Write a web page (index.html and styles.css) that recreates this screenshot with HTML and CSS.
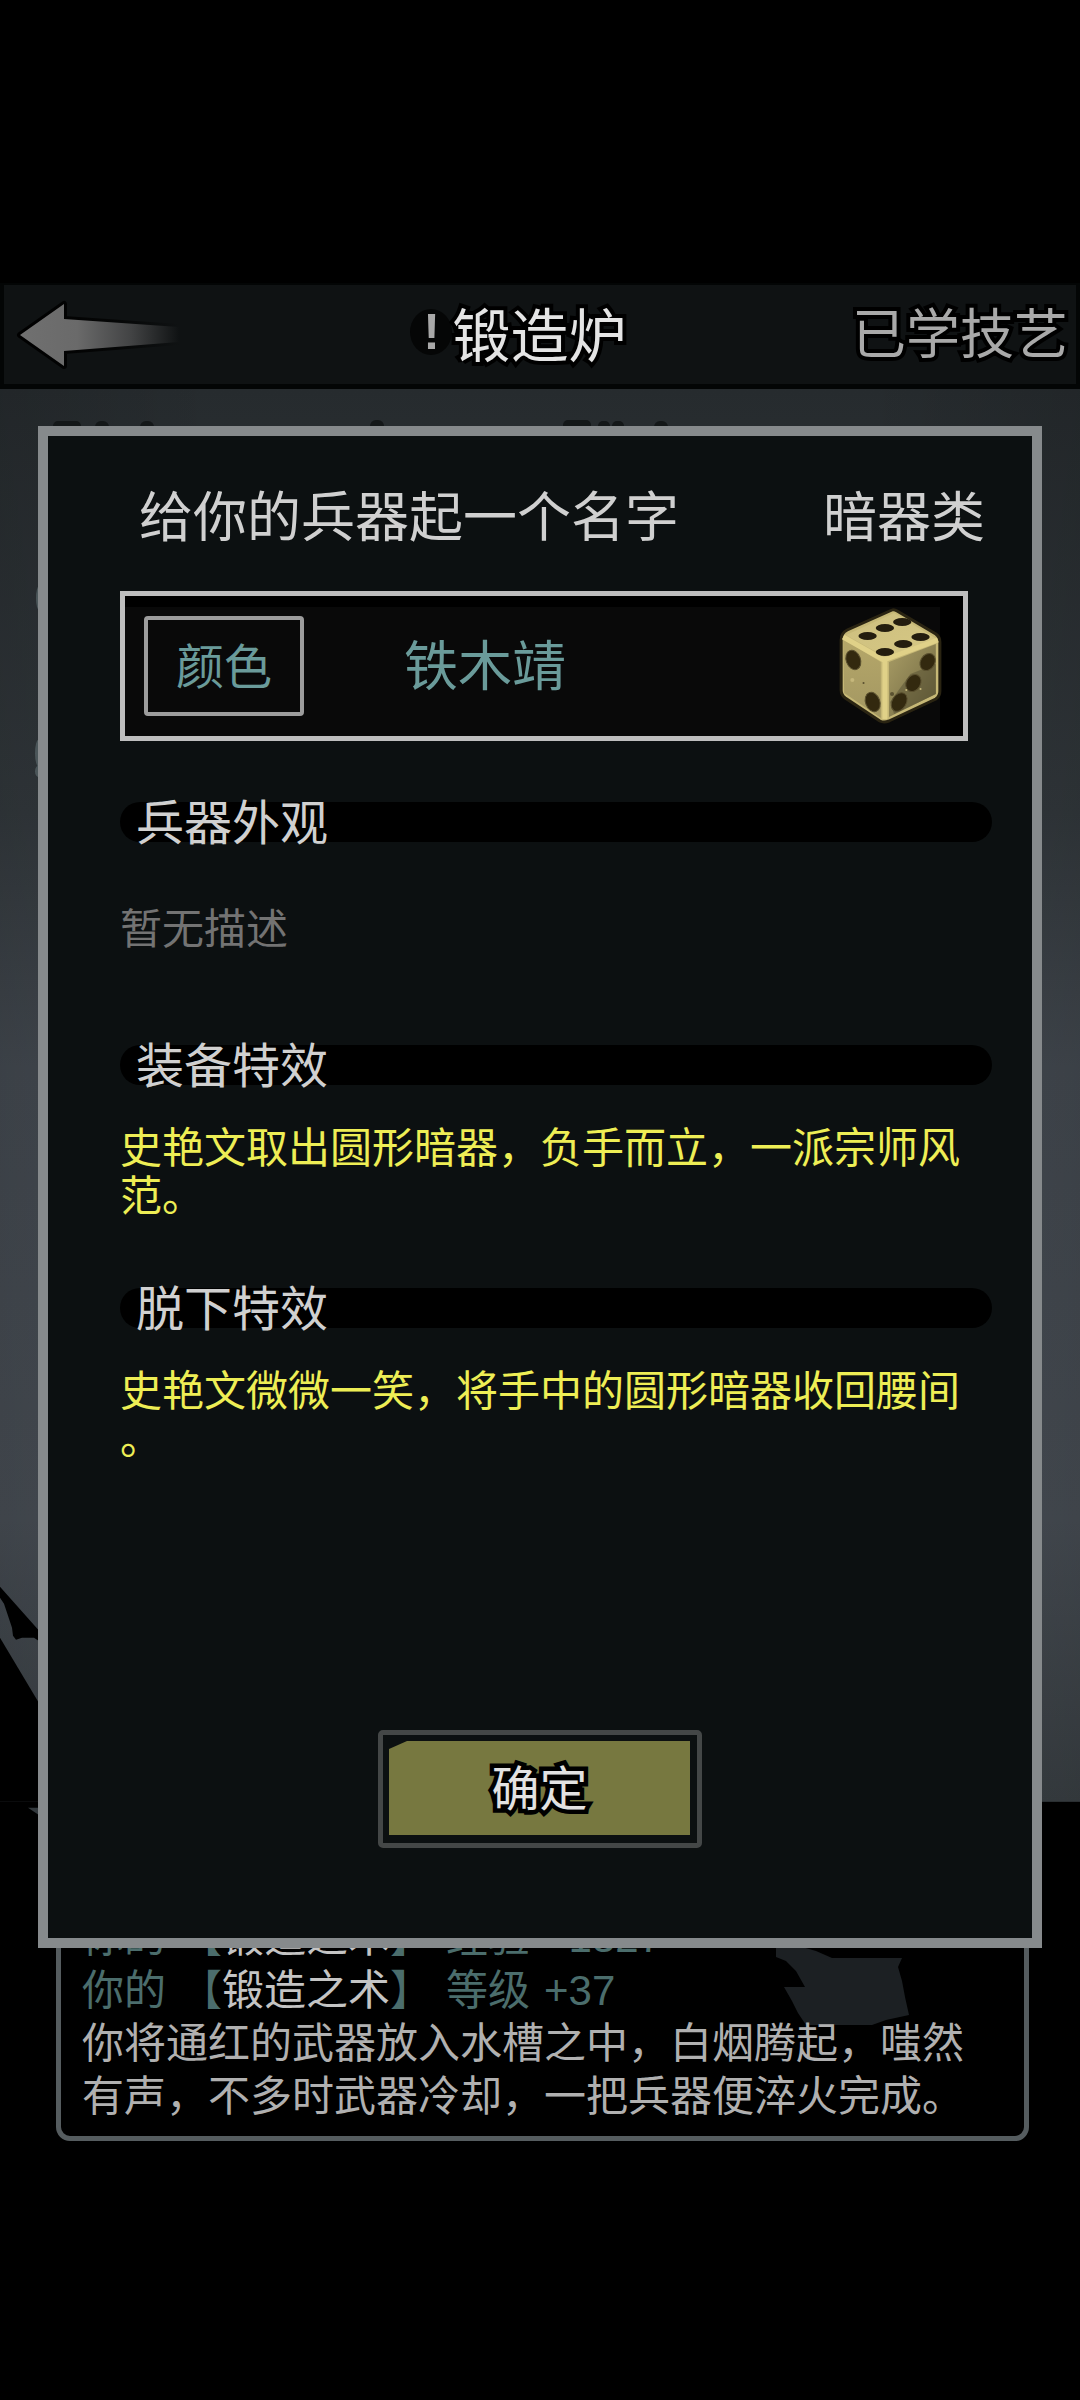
FILE: index.html
```html
<!DOCTYPE html>
<html lang="zh-CN">
<head>
<meta charset="utf-8">
<meta name="viewport" content="width=device-width">
<title>锻造炉</title>
<link rel="stylesheet" href="styles.css">
</head>
<body>
<header class="topbar">
  <button class="back" type="button" aria-label="返回">
    <svg width="172" height="80" viewBox="0 0 172 80" aria-hidden="true">
      <defs>
        <linearGradient id="tail" x1="0" x2="1" y1="0" y2="0">
          <stop offset="0" stop-color="#707070"/>
          <stop offset=".36" stop-color="#6a6a6a"/>
          <stop offset=".7" stop-color="#424344"/>
          <stop offset="1" stop-color="#0f1213"/>
        </linearGradient>
        <linearGradient id="edge" x1="0" x2="1" y1="0" y2="0">
          <stop offset="0" stop-color="#000"/>
          <stop offset=".6" stop-color="#050606"/>
          <stop offset="1" stop-color="#0f1213"/>
        </linearGradient>
      </defs>
      <path d="M7 40 51 9V24L166 32V47L51 56V71Z" fill="url(#tail)" stroke="url(#edge)" stroke-width="6" stroke-linejoin="round" paint-order="stroke"/>
    </svg>
  </button>
  <h1 class="title"><span class="mark">!</span>锻造炉</h1>
  <a class="skills" href="#skills">已学技艺</a>
</header>
<main class="stage">
  <svg class="scene" viewBox="0 0 1080 1751" preserveAspectRatio="none" aria-hidden="true">
    <defs>
      <linearGradient id="wall" x1="0" x2="0" y1="0" y2="1">
        <stop offset="0" stop-color="#262b2e"/>
        <stop offset=".3" stop-color="#32383c"/>
        <stop offset=".48" stop-color="#434950"/>
        <stop offset=".8" stop-color="#474d54"/>
        <stop offset="1" stop-color="#393f43"/>
      </linearGradient>
      <linearGradient id="shade" x1="0" x2="1" y1="0" y2="0">
        <stop offset="0" stop-color="#000" stop-opacity=".12"/>
        <stop offset=".2" stop-color="#000" stop-opacity="0"/>
        <stop offset=".8" stop-color="#000" stop-opacity="0"/>
        <stop offset="1" stop-color="#000" stop-opacity=".12"/>
      </linearGradient>
    </defs>
    <rect width="1080" height="1412" fill="url(#wall)"/>
    <rect width="1080" height="1412" fill="url(#shade)"/>
    <path d="M0 1197 40 1242V1252L34 1248H22L16 1250 13 1246 12 1238 4 1214 0 1208Z"/>
    <path d="M0 1248 40 1315V1412H0Z"/>
    <path d="M28 1418H40V1426Z" fill="#33393d"/>
    <g fill="#131718">
      <rect x="53" y="32" width="28" height="12" rx="5"/>
      <rect x="95" y="32" width="14" height="12" rx="6"/>
      <rect x="140" y="32" width="14" height="12" rx="6"/>
      <rect x="370" y="31" width="14" height="12" rx="6"/>
      <rect x="563" y="31" width="28" height="12" rx="5"/>
      <rect x="598" y="32" width="12" height="12" rx="5"/>
      <rect x="612" y="32" width="12" height="12" rx="5"/>
      <rect x="654" y="32" width="14" height="12" rx="6"/>
    </g>
    <g fill="#4b5659">
      <ellipse cx="39" cy="209" rx="3" ry="12"/>
      <ellipse cx="39" cy="364" rx="4" ry="14"/>
      <ellipse cx="39" cy="382" rx="4" ry="6"/>
    </g>
  </svg>

  <section class="log" aria-label="消息">
    <p class="gain"><span>你的</span><span>【<span class="art">锻造之术</span>】</span><span>经验</span><span>+1327</span></p>
    <p class="gain"><span>你的</span><span>【<span class="art">锻造之术</span>】</span><span>等级</span><span>+37</span></p>
    <p>你将通红的武器放入水槽之中，白烟腾起，嗤然有声，不多时武器冷却，一把兵器便淬火完成。</p>
    <svg class="smoke" width="136" height="80" viewBox="0 0 136 80" aria-hidden="true">
      <path d="M0 0H26L40 4 56 11H126L122 20 126 34 129 50 133 68 110 73 96 78H30L22 66 16 54 8 40H29L20 24 10 14 0 10Z" fill="#1c2023"/>
    </svg>
  </section>

  <form class="dialog" role="dialog" aria-labelledby="dialog-title">
    <div class="dialog-head">
      <label class="prompt" id="dialog-title" for="weapon-name">给你的兵器起一个名字</label>
      <span>暗器类</span>
    </div>
    <div class="name-box">
      <div class="name-row">
        <button class="color" type="button">颜色</button>
        <input class="name" id="weapon-name" type="text" value="铁木靖">
        <button class="dice" type="button" aria-label="随机名字">
          <svg width="114" height="124" viewBox="0 0 112 124" preserveAspectRatio="none" aria-hidden="true">
            <defs>
              <linearGradient id="top" x1="0" x2="1" y1="0" y2="1">
                <stop offset="0" stop-color="#cdbf7f"/><stop offset="1" stop-color="#d6c884"/>
              </linearGradient>
              <linearGradient id="left" x1="0" x2="0" y1="0" y2="1">
                <stop offset="0" stop-color="#b5a769"/><stop offset="1" stop-color="#a39762"/>
              </linearGradient>
              <linearGradient id="right" x1="0" x2="1" y1="0" y2="1">
                <stop offset="0" stop-color="#a99d66"/><stop offset=".5" stop-color="#8b8152"/><stop offset="1" stop-color="#57502f"/>
              </linearGradient>
            </defs>
            <path d="M58 6 14 26Q8 29 8 36V86Q8 91 12 94L46 117Q50 119 55 117L101 95Q105 92 105 87V38Q105 33 101 30L63 7Q60 5 58 6Z" fill="#c6b876" stroke="#2a2412" stroke-width="3"/>
            <path d="M60 9 13 31 51 53 102 35Z" fill="url(#top)"/>
            <path d="M10 35 47 58V114L11 89Z" fill="url(#left)"/>
            <path d="M55 58 101 40V90L55 113Z" fill="url(#right)"/>
            <path d="M76 70 101 60V90L60 110 56 98Z" fill="#5f5838" opacity=".6"/>
            <path d="M10 33 50 56 103 36M51 56V115" fill="none" stroke="#e0d188" stroke-width="5" stroke-linejoin="round"/>
            <g fill="#241d0e">
              <ellipse cx="68" cy="18" rx="9" ry="4"/><ellipse cx="51" cy="24" rx="9" ry="4"/><ellipse cx="34" cy="32" rx="9" ry="4"/>
              <ellipse cx="86" cy="33" rx="9" ry="4"/><ellipse cx="69" cy="40" rx="9" ry="4"/><ellipse cx="51" cy="48" rx="9" ry="4"/>
            </g>
            <g fill="#33290f" stroke="#5b5130" stroke-width="1">
              <ellipse cx="20" cy="56" rx="7" ry="10" transform="rotate(-20 20 56)"/>
              <ellipse cx="39" cy="98" rx="7" ry="10" transform="rotate(-20 39 98)"/>
              <ellipse cx="93" cy="58" rx="7" ry="9" transform="rotate(30 93 58)"/>
              <ellipse cx="79" cy="79" rx="7" ry="9" transform="rotate(30 79 79)"/>
              <ellipse cx="65" cy="98" rx="7" ry="10" transform="rotate(30 65 98)"/>
            </g>
            <g fill="#c5b77b"><circle cx="19" cy="76" r="2"/><circle cx="72" cy="86" r="1"/><circle cx="86" cy="85" r="1"/></g>
            <g fill="#5a5130"><circle cx="30" cy="79" r="1"/><circle cx="58" cy="90" r="2"/></g>
          </svg>
        </button>
      </div>
    </div>

    <section class="block">
      <h2 class="heading">兵器外观</h2>
      <p class="empty">暂无描述</p>
    </section>
    <section class="block">
      <h2 class="heading">装备特效</h2>
      <p class="effect">史艳文取出圆形暗器，负手而立，一派宗师风范。</p>
    </section>
    <section class="block">
      <h2 class="heading">脱下特效</h2>
      <p class="effect">史艳文微微一笑，将手中的圆形暗器收回腰间。</p>
    </section>

    <button class="confirm" type="submit"><span class="confirm-face">确定</span></button>
  </form>
</main>
</body>
</html>
```
FILE: styles.css
```css
* {
  box-sizing: border-box;
}

body {
  margin: 0;
  min-height: 100vh;
  padding: 283px 0 260px;
  background: #000;
  color: #d0d0d0;
  font-family: "Liberation Sans", "Noto Sans CJK SC", sans-serif;
  font-size: 42px;
  font-weight: 400;
}

h1,
h2,
p {
  margin: 0;
  font-weight: inherit;
}

button,
input {
  padding: 0;
  border: 0;
  background: none;
  color: inherit;
  font: inherit;
}

/* Top bar */

.topbar {
  display: flex;
  align-items: center;
  justify-content: space-between;
  height: 106px;
  padding: 0 8px 0 9px;
  border: solid #030505;
  border-width: 2px 4px 5px;
  background: #0f1213;
}

.back,
.back svg,
.dice svg {
  display: block;
}

.title,
.skills {
  -webkit-text-stroke: 8px #000;
  paint-order: stroke fill;
  stroke-linejoin: round;
  line-height: 80px;
  white-space: nowrap;
}

.title {
  display: flex;
  align-items: center;
  padding-bottom: 6px;
  color: #e4e4e4;
  font-family: "KaiTi", "Kaiti SC", "STKaiti", "Noto Sans CJK SC", sans-serif;
  font-size: 58px;
}

.mark {
  width: 42px;
  height: 46px;
  border-radius: 50%;
  background: #050606;
  color: #a8a8a8;
  font-family: "Liberation Sans", sans-serif;
  font-size: 50px;
  font-weight: 700;
  line-height: 46px;
  text-align: center;
  -webkit-text-stroke: 0;
}

.skills {
  color: #a9a9a9;
  font-size: 54px;
  text-decoration: none;
}

/* Stage: the log and the dialog share one cell above the scene */

.stage {
  position: relative;
  display: grid;
  grid-template-columns: minmax(0, 1fr);
}

.stage > .log,
.stage > .dialog {
  grid-area: 1 / 1;
  position: relative;
}

.scene {
  position: absolute;
  inset: 0;
  width: 100%;
  height: 100%;
}

.log {
  isolation: isolate;
  align-self: end;
  margin: 0 51px 0 56px;
  padding: 11px 30px 13px 21px;
  border: 5px solid #555c5f;
  border-radius: 14px;
  background: #000;
  color: #b0b0b0;
  line-height: 53px;
}

.log p {
  position: relative;
  z-index: 1;
}

.log .gain {
  display: flex;
  gap: 14px;
  color: #4b6d6c;
}

.log .art {
  color: #c4c4c4;
}

.smoke {
  position: absolute;
  top: 47px;
  right: 112px;
}

/* Dialog */

.dialog {
  align-self: start;
  display: flex;
  flex-direction: column;
  margin: 37px 38px 193px;
  padding: 52px 40px 90px 72px;
  border: 10px solid #868a8c;
  background: #0c1011;
}

.dialog-head {
  display: flex;
  justify-content: space-between;
  padding: 0 7px 0 19px;
  font-size: 54px;
  line-height: 60px;
}

.name-box {
  height: 150px;
  margin: 43px 24px 0 0;
  padding: 11px 23px 0 0;
  border: 5px solid #bebebe;
  background: #000;
}

.name-row {
  display: flex;
  align-items: center;
  height: 100%;
  padding: 0 0 12px 19px;
  background: #090909;
  color: #6a9b9a;
}

.color {
  flex: none;
  width: 160px;
  height: 100px;
  padding-bottom: 6px;
  border: 4px solid #9c9c9c;
  border-radius: 4px;
  font-size: 48px;
}

.name {
  flex: 1;
  min-width: 0;
  margin-left: 100px;
  padding-top: 2px;
  font-size: 54px;
  line-height: 80px;
}

.dice {
  flex: none;
  margin-right: -7px;
}

.block {
  min-height: 243px;
}

.name-box + .block {
  margin-top: 61px;
}

.heading {
  height: 40px;
  padding-left: 16px;
  border-radius: 20px;
  background: #000;
  font-size: 48px;
  line-height: 44px;
}

.empty {
  margin-top: 64px;
  color: #737373;
  line-height: 48px;
}

.effect {
  padding: 40px 24px 0 0;
  color: #eeee55;
  line-height: 48px;
  line-break: anywhere;
}

.confirm {
  align-self: center;
  width: 324px;
  height: 118px;
  margin: 199px 32px 0 0;
  padding: 6px 7px 8px 6px;
  border: 5px solid #444747;
  border-radius: 5px;
}

.confirm-face {
  display: block;
  height: 94px;
  background: #777840;
  clip-path: polygon(0 8px, 18px 0, 100% 0, 100% 100%, 0 100%);
  color: #e2e2e2;
  font-size: 48px;
  line-height: 98px;
  -webkit-text-stroke: 9px #000;
  paint-order: stroke fill;
  stroke-linejoin: round;
}
```
